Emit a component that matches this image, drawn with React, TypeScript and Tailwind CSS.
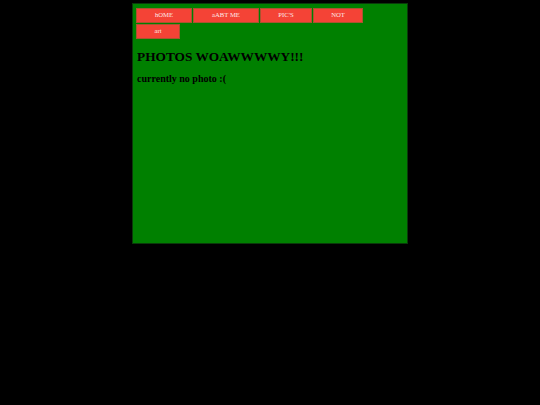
export default function App() {
  const links = [
    { label: "hOME", w: "w-[56px]" },
    { label: "aABT ME", w: "w-[66px]" },
    { label: "PIC'S", w: "w-[52px]" },
    { label: "NOT", w: "w-[50px]" },
    { label: "art", w: "w-[44px]" },
  ];

  return (
    <div className="min-h-screen bg-black pt-[3px] font-['Liberation_Serif',serif]">
      <div className="mx-auto h-[241px] w-[276px] border border-[#0a3a0a] bg-[#008000] px-[3px] pt-[4px]">
        <nav className="flex flex-wrap gap-x-[1px] gap-y-[1px]">
          {links.map((l) => (
            <a
              key={l.label}
              className={`${l.w} flex h-[15px] items-center justify-center border border-[#a8552f] bg-[#f44336] text-[6.7px] font-normal text-[#fde8e6]`}
            >
              {l.label}
            </a>
          ))}
        </nav>
        <h1 className="mt-[11px] pl-[1px] text-[13.33px] font-bold leading-[14.8px] text-black">
          PHOTOS WOAWWWWY!!!
        </h1>
        <h2 className="mt-[8px] pl-[1px] text-[10px] font-bold leading-[11px] text-black">
          currently no photo :(
        </h2>
      </div>
    </div>
  );
}
